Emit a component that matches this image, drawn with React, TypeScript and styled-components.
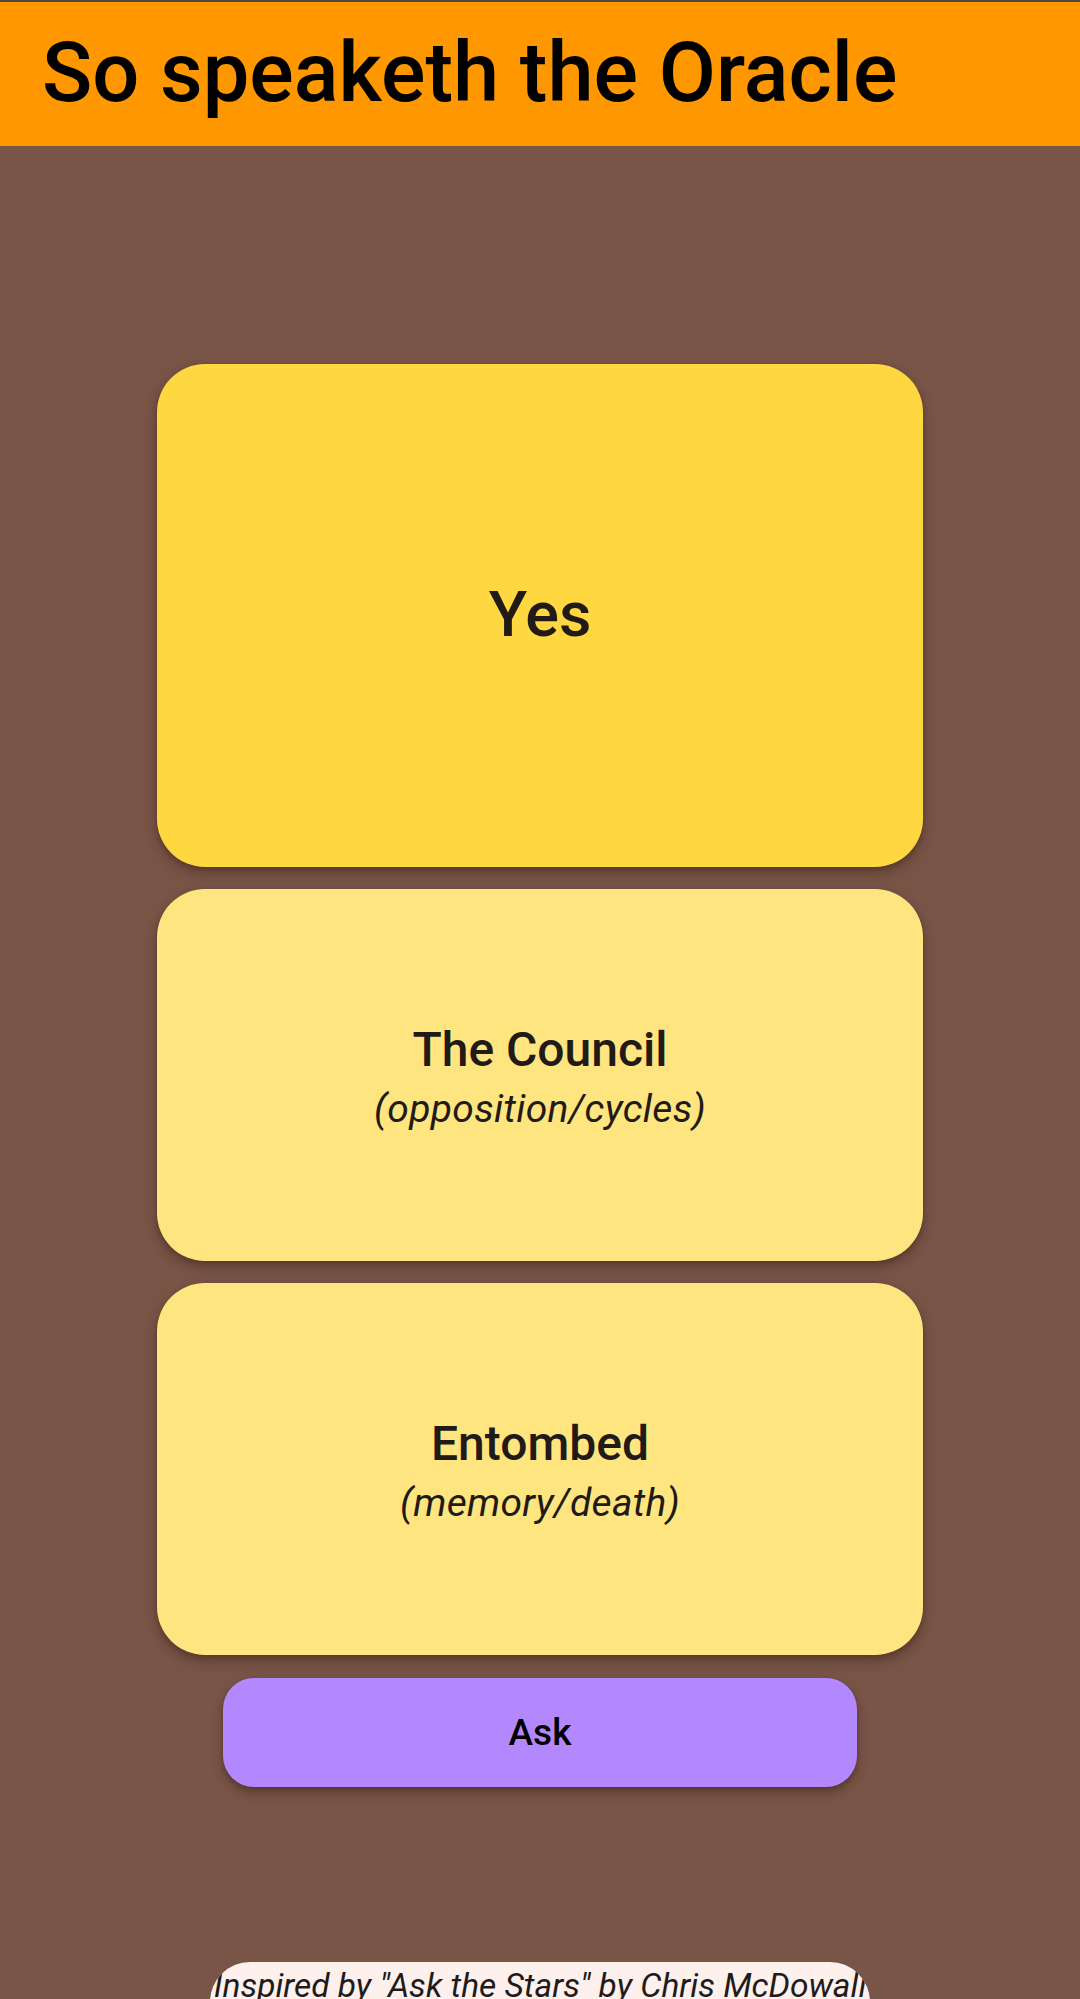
import React from "react";
import styled, { createGlobalStyle } from "styled-components";

const GlobalStyle = createGlobalStyle`
  html, body {
    margin: 0;
    padding: 0;
    background: #795548;
    font-family: Roboto, "Noto Sans", sans-serif;
    overflow: hidden;
  }
`;

const Page = styled.div`
  height: 100vh;
  display: flex;
  flex-direction: column;
  background: #795548;
  overflow: hidden;
`;

const AppBar = styled.header`
  height: 144px;
  border-top: 2px solid #54463d;
  background: #ff9800;
  display: flex;
  align-items: center;
  padding: 0 42px;
  flex-shrink: 0;
`;

const Title = styled.h1`
  margin: 0;
  font-family: Roboto, sans-serif;
  font-weight: 500;
  font-size: 83px;
  line-height: 1;
  color: #000;
  transform: translateY(-2px);
`;

const Main = styled.main`
  display: flex;
  flex-direction: column;
  align-items: center;
  padding-top: 218px;
  gap: 22px;
  flex-shrink: 0;
`;

const Card = styled.div<{ $primary?: boolean; $height: number }>`
  width: 766px;
  height: ${(p) => p.$height}px;
  border-radius: 48px;
  background: ${(p) => (p.$primary ? "#ffd740" : "#ffe57f")};
  box-shadow: 0 6px 14px rgba(40, 20, 10, 0.35), 0 2px 4px rgba(40, 20, 10, 0.2);
  display: flex;
  flex-direction: column;
  align-items: center;
  justify-content: center;
  color: #211a16;
`;

const BigAnswer = styled.div`
  font-size: 63px;
  font-weight: 500;
  line-height: 1.17;
  transform: translateY(-1px);
`;

const CardText = styled.div`
  display: flex;
  flex-direction: column;
  align-items: center;
  transform: translateY(2px);
`;

const CardTitle = styled.div`
  font-size: 48px;
  font-weight: 500;
  line-height: 1.2;
`;

const CardSubtitle = styled.div`
  font-size: 39px;
  font-style: italic;
  font-weight: 400;
  line-height: 1.2;
  margin-top: 8px;
  letter-spacing: 0.3px;
`;

const AskButton = styled.button`
  margin-top: 1px;
  width: 634px;
  height: 109px;
  border: none;
  border-radius: 31px;
  background: #b388ff;
  color: #000;
  font-family: Roboto, sans-serif;
  font-size: 37px;
  font-weight: 500;
  box-shadow: 0 6px 12px rgba(40, 20, 10, 0.35), 0 2px 4px rgba(40, 20, 10, 0.2);
  cursor: pointer;
`;

const Footer = styled.footer`
  margin-top: 175px;
  display: flex;
  justify-content: center;
  flex-shrink: 0;
`;

const Credit = styled.div`
  width: 660px;
  height: 90px;
  border-radius: 40px;
  background: #fdf0ed;
  display: flex;
  justify-content: center;
  overflow: hidden;
  padding-top: 4px;
  box-sizing: border-box;
`;

const CreditText = styled.span`
  font-size: 33.5px;
  font-style: italic;
  color: #1f1b1a;
  white-space: nowrap;
  line-height: 1.2;
`;

const draws = [
  { title: "The Council", subtitle: "(opposition/cycles)" },
  { title: "Entombed", subtitle: "(memory/death)" },
];

export default function App() {
  return (
    <Page>
      <GlobalStyle />
      <AppBar>
        <Title>So speaketh the Oracle</Title>
      </AppBar>
      <Main>
        <Card $primary $height={503}>
          <BigAnswer>Yes</BigAnswer>
        </Card>
        {draws.map((d) => (
          <Card key={d.title} $height={372}>
            <CardText>
              <CardTitle>{d.title}</CardTitle>
              <CardSubtitle>{d.subtitle}</CardSubtitle>
            </CardText>
          </Card>
        ))}
        <AskButton>Ask</AskButton>
      </Main>
      <Footer>
        <Credit>
          <CreditText>Inspired by "Ask the Stars" by Chris McDowall</CreditText>
        </Credit>
      </Footer>
    </Page>
  );
}
